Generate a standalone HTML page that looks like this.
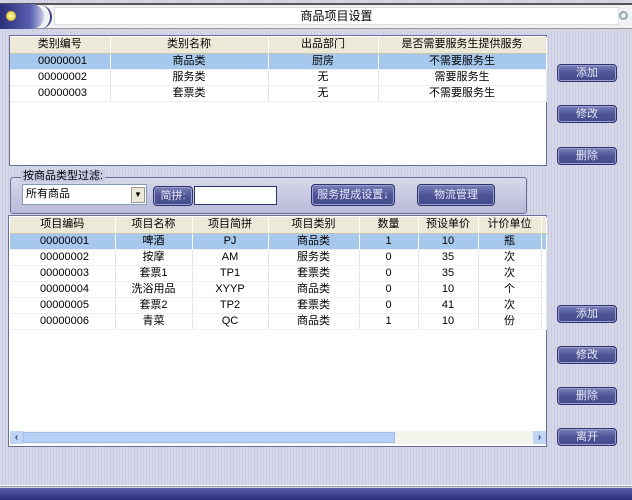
<!DOCTYPE html>
<html><head><meta charset="utf-8"><style>
*{margin:0;padding:0;box-sizing:border-box}
body{width:632px;height:500px;overflow:hidden;position:relative;font-family:"Liberation Sans","Noto Sans CJK SC",sans-serif;font-size:11px;color:#000;
background:repeating-linear-gradient(90deg,#d6d8ea 0,#d6d8ea 2px,#c9cbe0 2px,#c9cbe0 3px);}
.a{position:absolute}
.btn{position:absolute;width:60px;height:18px;border-radius:4px;background:linear-gradient(#7a80b8,#4e5496 50%,#444a8c);border:1px solid #2e336e;box-shadow:inset 0 0 0 1px #9aa0d0;color:#e8e8f6;text-align:center;line-height:16px;font-size:11px}
table{border-collapse:collapse;position:absolute;table-layout:fixed}
tr{height:16px}
td{line-height:15px;text-align:center;border-right:1px solid #e4e4e4;border-bottom:1px solid #eee;font-size:11px;white-space:nowrap;overflow:hidden;padding:0}
tr.h td{background:#ece9d8;border-right:1px solid #fff;border-bottom:1px solid #c8c4b0}
tr.s td{background:#a6c8ec;border-right:1px solid #fff}
</style></head><body>
<div class="a" style="left:0;top:3px;width:632px;height:26px;background:#f2f2f4;border-top:2px solid #555;border-bottom:1px solid #999"></div>
<div class="a" style="left:0;top:4px;width:44px;height:25px;border-radius:0 14px 14px 0;background:linear-gradient(90deg,#2a2f78,#5a60b0 70%,#c8cae8)"></div>
<div class="a" style="left:6px;top:11px;width:10px;height:10px;border-radius:50%;background:radial-gradient(#ffffc0,#e8d040 60%,#8080c0)"></div>
<div class="a" style="left:40px;top:5px;width:12px;height:24px;border-radius:0 12px 12px 0;border-right:2px solid #3a3f88"></div>
<div class="a" style="left:54px;top:7px;width:565px;height:18px;background:#fff;border:1px solid #ddd;text-align:center;line-height:17px;font-size:12px">商品项目设置</div>
<div class="a" style="left:619px;top:11px;width:9px;height:9px;border-radius:50%;border:2px solid #9aa;background:#eee"></div>
<div class="a" style="left:9px;top:35px;width:538px;height:131px;background:#fff;border:1px solid #6a6e9a"></div>
<table style="left:10px;top:37px;width:536px">
<colgroup><col style="width:100px"><col style="width:158px"><col style="width:110px"><col style="width:168px"></colgroup>
<tr class="h"><td>类别编号</td><td>类别名称</td><td>出品部门</td><td>是否需要服务生提供服务</td></tr>
<tr class="s"><td style="text-align:left;padding-left:28px">00000001</td><td>商品类</td><td>厨房</td><td>不需要服务生</td></tr>
<tr><td style="text-align:left;padding-left:28px">00000002</td><td>服务类</td><td>无</td><td>需要服务生</td></tr>
<tr><td style="text-align:left;padding-left:28px">00000003</td><td>套票类</td><td>无</td><td>不需要服务生</td></tr>
</table>
<div class="a" style="left:10px;top:177px;width:517px;height:37px;border:1px solid #6a6e9a;border-radius:3px;background:linear-gradient(#d6d8ea,#b8bad8)"></div>
<div class="a" style="left:21px;top:170px;padding:0 2px;background:#c8cae4;font-size:11px;line-height:12px">按商品类型过滤:</div>
<div class="a" style="left:22px;top:184px;width:125px;height:21px;background:#fff;border:1px solid #7f9db9;line-height:19px;padding-left:3px">所有商品</div>
<div class="a" style="left:131px;top:187px;width:14px;height:16px;background:#ece9d8;border:1px solid #999;font-size:8px;text-align:center;line-height:14px">▼</div>
<div class="btn" style="left:153px;top:186px;width:40px;height:20px;line-height:18px">简拼:</div>
<div class="a" style="left:194px;top:186px;width:83px;height:19px;background:#fff;border:1px solid #2e336e"></div>
<div class="btn" style="left:311px;top:184px;width:84px;height:22px;line-height:20px">服务提成设置↓</div>
<div class="btn" style="left:417px;top:184px;width:78px;height:22px;line-height:20px">物流管理</div>
<div class="a" style="left:8px;top:215px;width:539px;height:232px;background:#fff;border:1px solid #6a6e9a"></div>
<table style="left:10px;top:217px;width:536px">
<colgroup><col style="width:105px"><col style="width:77px"><col style="width:76px"><col style="width:91px"><col style="width:59px"><col style="width:60px"><col style="width:63px"><col style="width:5px"></colgroup>
<tr class="h"><td>项目编码</td><td>项目名称</td><td>项目简拼</td><td>项目类别</td><td>数量</td><td>预设单价</td><td>计价单位</td><td></td></tr>
<tr class="s"><td style="text-align:left;padding-left:30px">00000001</td><td>啤酒</td><td>PJ</td><td>商品类</td><td>1</td><td>10</td><td>瓶</td><td></td></tr>
<tr><td style="text-align:left;padding-left:30px">00000002</td><td>按摩</td><td>AM</td><td>服务类</td><td>0</td><td>35</td><td>次</td><td></td></tr>
<tr><td style="text-align:left;padding-left:30px">00000003</td><td>套票1</td><td>TP1</td><td>套票类</td><td>0</td><td>35</td><td>次</td><td></td></tr>
<tr><td style="text-align:left;padding-left:30px">00000004</td><td>洗浴用品</td><td>XYYP</td><td>商品类</td><td>0</td><td>10</td><td>个</td><td></td></tr>
<tr><td style="text-align:left;padding-left:30px">00000005</td><td>套票2</td><td>TP2</td><td>套票类</td><td>0</td><td>41</td><td>次</td><td></td></tr>
<tr><td style="text-align:left;padding-left:30px">00000006</td><td>青菜</td><td>QC</td><td>商品类</td><td>1</td><td>10</td><td>份</td><td></td></tr>
</table>
<div class="a" style="left:10px;top:431px;width:536px;height:13px;background:#f4f4ec"></div>
<div class="a" style="left:10px;top:431px;width:13px;height:13px;background:#c0d4f4;color:#2a3a8a;font-size:10px;text-align:center;line-height:13px;font-weight:bold">‹</div>
<div class="a" style="left:23px;top:432px;width:372px;height:11px;background:#b8d0f4;border:1px solid #a0bce8"></div>
<div class="a" style="left:533px;top:431px;width:13px;height:13px;background:#c0d4f4;color:#2a3a8a;font-size:10px;text-align:center;line-height:13px;font-weight:bold">›</div>
<div class="btn" style="left:557px;top:64px">添加</div>
<div class="btn" style="left:557px;top:105px">修改</div>
<div class="btn" style="left:557px;top:147px">删除</div>
<div class="btn" style="left:557px;top:305px">添加</div>
<div class="btn" style="left:557px;top:346px">修改</div>
<div class="btn" style="left:557px;top:387px">删除</div>
<div class="btn" style="left:557px;top:428px">离开</div>
<div class="a" style="left:0;top:485px;width:632px;height:2px;background:#fff;border-bottom:1px solid #999"></div>
<div class="a" style="left:0;top:488px;width:632px;height:12px;background:linear-gradient(#5a60b0,#2a2f78)"></div>
</body></html>
